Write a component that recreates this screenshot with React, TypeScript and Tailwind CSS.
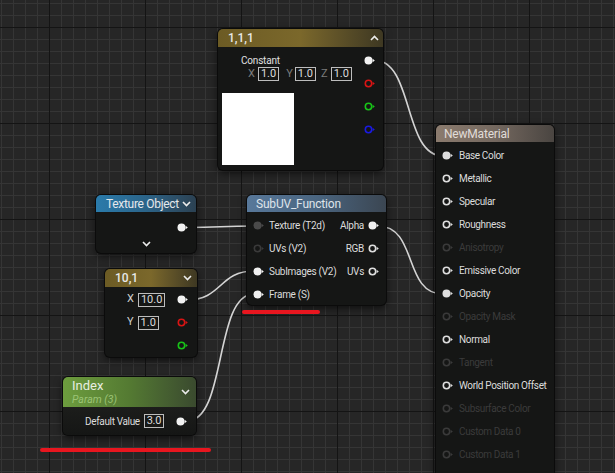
import React from 'react';

const W = 615;
const H = 473;

function Grid() {
  const minorV: number[] = [];
  for (let x = 1; x < W; x += 12) minorV.push(x);
  const minorH: number[] = [];
  for (let y = 3; y < H; y += 12) minorH.push(y);
  const majorV = [49, 145, 241, 337, 433, 529];
  const majorH = [27, 123, 219, 315, 411];
  return (
    <svg className="absolute inset-0" width={W} height={H}>
      {minorV.map((x) => (
        <line key={'v' + x} x1={x + 0.5} y1={0} x2={x + 0.5} y2={H} stroke="#353535" strokeWidth="1" />
      ))}
      {minorH.map((y) => (
        <line key={'h' + y} x1={0} y1={y + 0.5} x2={W} y2={y + 0.5} stroke="#353535" strokeWidth="1" />
      ))}
      {majorV.map((x) => (
        <line key={'V' + x} x1={x + 0.5} y1={0} x2={x + 0.5} y2={H} stroke="#141414" strokeWidth="1" />
      ))}
      {majorH.map((y) => (
        <line key={'H' + y} x1={0} y1={y + 0.5} x2={W} y2={y + 0.5} stroke="#141414" strokeWidth="1" />
      ))}
    </svg>
  );
}

function Wires() {
  const c = '#d4d4d4';
  return (
    <svg className="absolute inset-0" width={W} height={H} fill="none">
      <path d="M374 60 C414 60, 403 156, 443 156" stroke={c} strokeWidth="1.6" />
      <path d="M187 227.5 C220 227.5, 221 226, 254 226" stroke={c} strokeWidth="1.6" />
      <path d="M187 300 C222 300, 219 271, 254 271" stroke={c} strokeWidth="1.6" />
      <path d="M187 421 C227 421, 214 294, 254 294" stroke={c} strokeWidth="1.6" />
      <path d="M378 226 C418 226, 403 294, 443 294" stroke={c} strokeWidth="1.6" />
    </svg>
  );
}

type PinKind = 'filled' | 'hollow';

function Pin({ kind = 'filled', color = '#f0f0f0' }: { kind?: PinKind; color?: string }) {
  return (
    <svg width="11" height="9" viewBox="0 0 11 9" className="block shrink-0">
      {kind === 'filled' ? (
        <circle cx="4.5" cy="4.5" r="4" fill={color} />
      ) : (
        <circle cx="4.5" cy="4.5" r="3.2" fill="none" stroke={color} strokeWidth="1.6" />
      )}
      <path d="M8.6 2.7 L10.8 4.5 L8.6 6.3 Z" fill={color} />
    </svg>
  );
}

function Chevron({ up = false }: { up?: boolean }) {
  return (
    <svg width="9" height="6" viewBox="0 0 9 6" className="block shrink-0">
      <path d={up ? 'M1 5 L4.5 1.5 L8 5' : 'M1 1 L4.5 4.5 L8 1'} fill="none" stroke="#ececec" strokeWidth="1.6" />
    </svg>
  );
}

function Box({ v }: { v: string }) {
  return (
    <div className="flex h-[14px] items-center whitespace-nowrap border border-[#bdbdbd] px-[2px] text-[11px] leading-[12px] text-[#dcdcdc]">
      {v}
    </div>
  );
}

const nodeShell =
  "absolute flex flex-col overflow-hidden rounded-[5px] bg-[#151615] shadow-[0_0_0_1px_#0b0b0b,0_3px_8px_rgba(0,0,0,0.65)] font-['Roboto',sans-serif] whitespace-nowrap";

function MatRow({ label, kind, on }: { label: string; kind: PinKind; on: boolean }) {
  return (
    <div className="flex h-[23px] items-center gap-[6px] pl-[6px]">
      <Pin kind={kind} color={on ? '#dedede' : '#3a3a3a'} />
      <span
        className={
          on
            ? 'whitespace-nowrap text-[10px] tracking-[-0.35px] text-[#dcdcdc]'
            : 'whitespace-nowrap text-[10px] tracking-[-0.35px] text-[#3b3b3b]'
        }
      >
        {label}
      </span>
    </div>
  );
}

const matRows: [string, PinKind, boolean][] = [
  ['Base Color', 'filled', true],
  ['Metallic', 'hollow', true],
  ['Specular', 'hollow', true],
  ['Roughness', 'hollow', true],
  ['Anisotropy', 'hollow', false],
  ['Emissive Color', 'hollow', true],
  ['Opacity', 'filled', true],
  ['Opacity Mask', 'hollow', false],
  ['Normal', 'hollow', true],
  ['Tangent', 'hollow', false],
  ['World Position Offset', 'hollow', true],
  ['Subsurface Color', 'hollow', false],
  ['Custom Data 0', 'hollow', false],
  ['Custom Data 1', 'hollow', false],
];

export default function App() {
  return (
    <div className="relative h-[473px] w-[615px] overflow-hidden bg-[#262626]">
      <Grid />
      <Wires />

      {/* Constant 1,1,1 */}
      <div className={nodeShell + ' left-[218px] top-[29px] h-[141px] w-[165px]'}>
        <div className="flex h-[18px] shrink-0 items-center justify-between bg-linear-to-r from-[#6c5b24] via-[#7b682b] to-[#3e3822] pl-[10px] pr-[4px]">
          <span className="text-[12px] font-medium text-[#e8e8e8]">1,1,1</span>
          <Chevron up />
        </div>
        <div className="flex flex-1 justify-between">
          <div className="flex flex-col pl-[4px] pt-[8px]">
            <div className="ml-[19px] h-[12px] text-[10px] leading-[12px] tracking-[-0.2px] text-[#e0e0e0]">Constant</div>
            <div className="ml-[26px] flex h-[14px] items-center text-[11px] text-[#7c7c7c]">
              <span className="mr-[3px]">X</span>
              <Box v="1.0" />
              <span className="ml-[7px] mr-[2px]">Y</span>
              <Box v="1.0" />
              <span className="ml-[5px] mr-[3px]">Z</span>
              <Box v="1.0" />
            </div>
            <div className="mt-[12px] h-[72px] w-[72px] bg-white" />
          </div>
          <div className="flex flex-col gap-[14px] pr-[8px] pt-[9px]">
            <Pin kind="filled" color="#f2f2f2" />
            <Pin kind="hollow" color="#d81414" />
            <Pin kind="hollow" color="#18c218" />
            <Pin kind="hollow" color="#1a1ae0" />
          </div>
        </div>
      </div>

      {/* NewMaterial */}
      <div className={nodeShell + ' left-[436px] top-[125px] h-[360px] w-[118px]'}>
        <div className="flex h-[17px] shrink-0 items-center bg-linear-to-r from-[#8b7b6e] via-[#74685f] to-[#4a4541] pl-[8px]">
          <span className="text-[12px] tracking-[-0.2px] text-[#e0dcd8]">NewMaterial</span>
        </div>
        <div className="flex flex-col pt-[2px]">
          {matRows.map(([l, k, on]) => (
            <MatRow key={l} label={l} kind={k} on={on} />
          ))}
        </div>
      </div>

      {/* Texture Object */}
      <div className={nodeShell + ' left-[96px] top-[195px] h-[58px] w-[100px]'}>
        <div className="flex h-[17px] shrink-0 items-center justify-between bg-linear-to-r from-[#2a7bab] via-[#2b6489] to-[#2b4152] pl-[10px] pr-[5px]">
          <span className="whitespace-nowrap text-[12px] tracking-[-0.3px] text-[#e4e8ec]">Texture Object</span>
          <Chevron />
        </div>
        <div className="flex justify-end pr-[8px] pt-[11px]">
          <Pin kind="filled" color="#f2f2f2" />
        </div>
        <div className="mt-[9px] flex justify-center">
          <Chevron />
        </div>
      </div>

      {/* SubUV_Function */}
      <div className={nodeShell + ' left-[247px] top-[195px] h-[110px] w-[139px]'}>
        <div className="flex h-[17px] shrink-0 items-center bg-linear-to-r from-[#58789a] via-[#4a6580] to-[#3b4652] pl-[9px]">
          <span className="text-[12px] tracking-[-0.2px] text-[#dfe4ea]">SubUV_Function</span>
        </div>
        <div className="flex justify-between pt-[2px] text-[10px] tracking-[-0.3px] text-[#dcdcdc]">
          <div className="flex flex-col">
            <div className="flex h-[23px] items-center gap-[5px] pl-[6px]">
              <Pin kind="filled" color="#4a4a4a" />
              <span>Texture (T2d)</span>
            </div>
            <div className="flex h-[23px] items-center gap-[5px] pl-[6px]">
              <Pin kind="hollow" color="#3a3a3a" />
              <span>UVs (V2)</span>
            </div>
            <div className="flex h-[23px] items-center gap-[5px] pl-[6px]">
              <Pin kind="filled" color="#f0f0f0" />
              <span>SubImages (V2)</span>
            </div>
            <div className="flex h-[23px] items-center gap-[5px] pl-[6px]">
              <Pin kind="filled" color="#f0f0f0" />
              <span>Frame (S)</span>
            </div>
          </div>
          <div className="flex flex-col items-end pr-[7px]">
            <div className="flex h-[23px] items-center gap-[4px]">
              <span>Alpha</span>
              <Pin kind="filled" color="#f0f0f0" />
            </div>
            <div className="flex h-[23px] items-center gap-[4px]">
              <span>RGB</span>
              <Pin kind="hollow" color="#dedede" />
            </div>
            <div className="flex h-[23px] items-center gap-[4px]">
              <span>UVs</span>
              <Pin kind="hollow" color="#dedede" />
            </div>
          </div>
        </div>
      </div>

      {/* 10,1 */}
      <div className={nodeShell + ' left-[105px] top-[269px] h-[88px] w-[92px]'}>
        <div className="flex h-[18px] shrink-0 items-center justify-between bg-linear-to-r from-[#6c5b24] via-[#7b682b] to-[#3e3822] pl-[10px] pr-[5px]">
          <span className="text-[12px] font-medium text-[#e8e8e8]">10,1</span>
          <Chevron />
        </div>
        <div className="flex flex-col pt-[1px] text-[11px] text-[#cfcfcf]">
          <div className="flex h-[23px] items-center justify-between pl-[22px] pr-[9px]">
            <div className="flex items-center gap-[4px]">
              <span>X</span>
              <Box v="10.0" />
            </div>
            <Pin kind="filled" color="#f2f2f2" />
          </div>
          <div className="flex h-[23px] items-center justify-between pl-[22px] pr-[9px]">
            <div className="flex items-center gap-[4px]">
              <span>Y</span>
              <Box v="1.0" />
            </div>
            <Pin kind="hollow" color="#d81414" />
          </div>
          <div className="flex h-[23px] items-center justify-end pr-[9px]">
            <Pin kind="hollow" color="#18c218" />
          </div>
        </div>
      </div>

      {/* Index */}
      <div className={nodeShell + ' left-[63px] top-[377px] h-[58px] w-[133px]'}>
        <div className="flex h-[30px] shrink-0 items-center justify-between bg-linear-to-r from-[#6d9d3e] via-[#547a32] to-[#3a4a2e] pl-[9px] pr-[6px]">
          <div className="flex flex-col">
            <span className="text-[13px] leading-[15px] text-[#e8eee0]">Index</span>
            <span className="text-[10.5px] italic leading-[13px] text-[#9cc476]">Param (3)</span>
          </div>
          <Chevron />
        </div>
        <div className="flex h-[28px] items-center justify-between bg-linear-to-b from-[#1c1d1b] to-[#151615] pl-[22px] pr-[9px] text-[10px] tracking-[-0.35px] text-[#dcdcdc]">
          <div className="flex items-center gap-[4px]">
            <span>Default Value</span>
            <Box v="3.0" />
          </div>
          <Pin kind="filled" color="#f2f2f2" />
        </div>
      </div>

      {/* red annotation underlines */}
      <div className="absolute left-[242px] top-[310px] h-[4px] w-[78px] rounded-full bg-[#e8161f]" />
      <div className="absolute left-[40px] top-[448px] h-[4px] w-[171px] rounded-full bg-[#e8161f]" />
    </div>
  );
}
